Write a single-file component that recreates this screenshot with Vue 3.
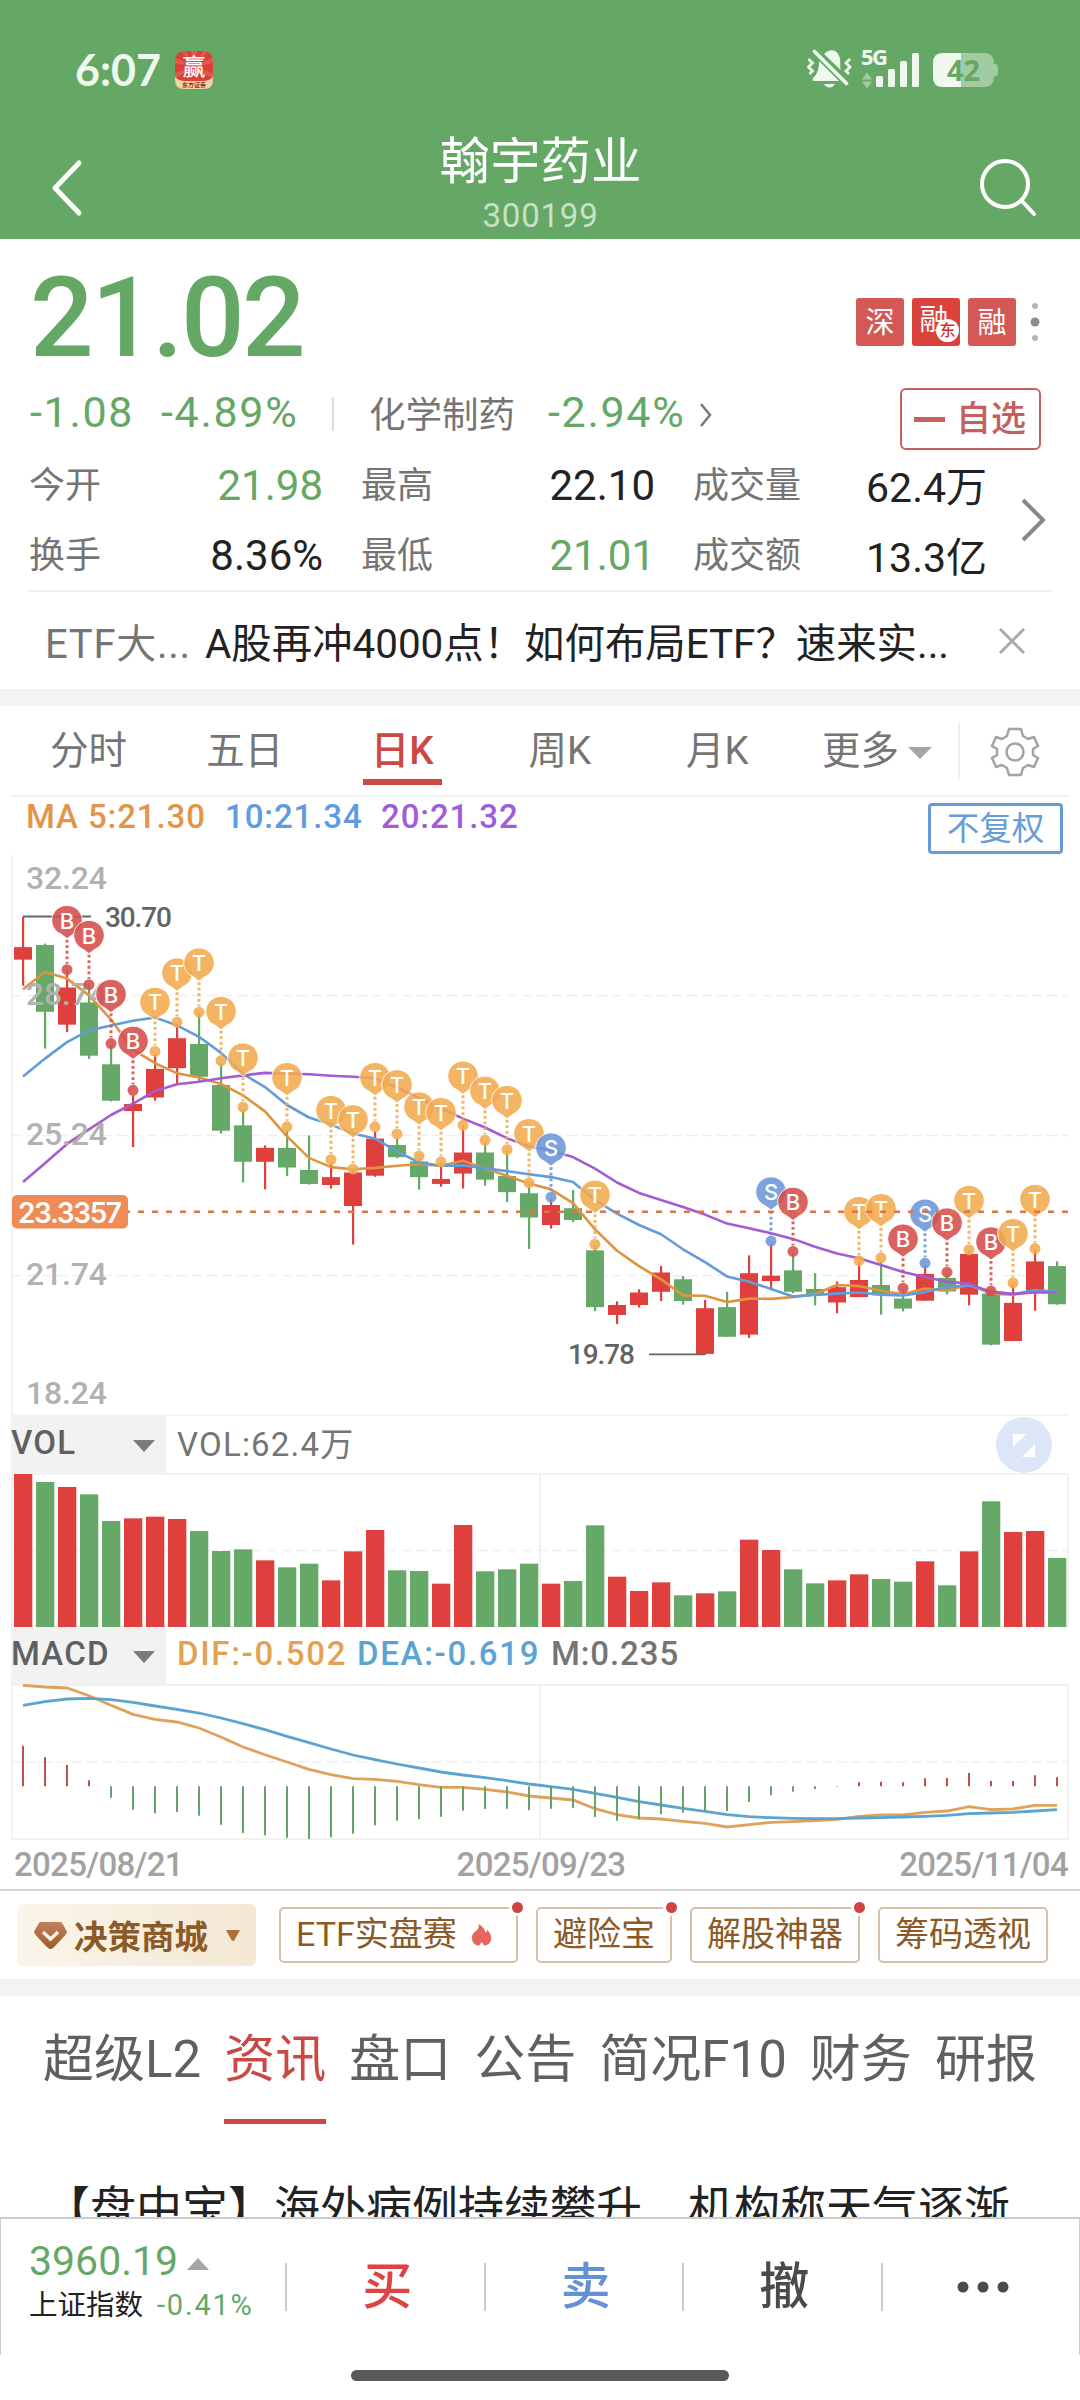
<script setup>
import { ref } from 'vue'

const period = ref('日K')
const periods = ['分时', '五日', '日K', '周K', '月K']
const section = ref('资讯')
const sections = ['超级L2', '资讯', '盘口', '公告', '简况F10', '财务', '研报']

const stats = [
    [
        { label: '今开', value: '21.98', down: true },
        { label: '换手', value: '8.36%' },
    ],
    [
        { label: '最高', value: '22.10' },
        { label: '最低', value: '21.01', down: true },
    ],
    [
        { label: '成交量', value: '62.4万' },
        { label: '成交额', value: '13.3亿' },
    ],
]

const chips = [
    { name: 'ETF实盘赛', dot: true, hot: true },
    { name: '避险宝', dot: true },
    { name: '解股神器', dot: true },
    { name: '筹码透视' },
]

// 共 48 根，涨红跌绿
const trend = 'RGRGGRRRGGGRGGRRRGGRRGGGRGGRRRGRGRRGGRRGGRGRGRRG'
const color = (i) => (trend[i] === 'R' ? '#e0403d' : '#66a867')
const cx = (i) => 23 + i * 22

// K线：最高、实体上沿、实体下沿、最低
const unit = 2.8
const candles = [
    [215, 300, 335, 408], [290, 294, 481, 584], [363, 413, 517, 538], [405, 455, 604, 613],
    [575, 628, 730, 732], [715, 739, 759, 860], [600, 641, 721, 730], [520, 555, 639, 684],
    [485, 571, 663, 675], [625, 686, 814, 822], [755, 799, 901, 959], [855, 862, 901, 978],
    [812, 862, 917, 941], [827, 924, 963, 965], [902, 944, 966, 976], [922, 931, 1025, 1133],
    [815, 836, 940, 943], [835, 854, 888, 891], [890, 900, 944, 979], [905, 949, 963, 971],
    [800, 875, 934, 976], [845, 875, 951, 968], [870, 941, 986, 1014], [965, 989, 1057, 1145],
    [1005, 1022, 1078, 1088], [980, 1031, 1064, 1070], [1135, 1149, 1308, 1319], [1292, 1302, 1330, 1355],
    [1258, 1267, 1302, 1309], [1193, 1211, 1265, 1291], [1221, 1230, 1291, 1301], [1288, 1311, 1439, 1441],
    [1265, 1308, 1391, 1391], [1163, 1213, 1385, 1394], [1130, 1220, 1235, 1257], [1155, 1205, 1265, 1269],
    [1213, 1257, 1272, 1303], [1236, 1252, 1295, 1325], [1180, 1232, 1280, 1280], [1180, 1246, 1275, 1329],
    [1258, 1284, 1312, 1320], [1190, 1215, 1290, 1290], [1215, 1226, 1264, 1272], [1150, 1159, 1273, 1303],
    [1265, 1270, 1413, 1415], [1245, 1296, 1403, 1403], [1145, 1180, 1265, 1318], [1180, 1193, 1300, 1301],
].map((c) => c.map((v) => v / unit))

const ma5 = [418, 370, 388, 435, 503, 587, 625, 653, 665, 683, 715, 760, 830, 890, 916, 922, 918, 912, 908, 912, 898, 920, 940, 962, 978, 1017, 1090, 1150, 1193, 1230, 1275, 1276, 1294, 1284, 1285, 1280, 1272, 1246, 1249, 1262, 1272, 1256, 1262, 1245, 1270, 1273, 1265, 1268]
const ma10 = [662, 612, 566, 533, 519, 506, 497, 519, 551, 596, 655, 692, 742, 777, 797, 822, 836, 872, 903, 912, 911, 919, 927, 936, 944, 958, 1008, 1046, 1078, 1104, 1146, 1182, 1222, 1237, 1257, 1278, 1274, 1270, 1267, 1273, 1275, 1266, 1252, 1247, 1264, 1272, 1260, 1265]
const ma20 = [958, 905, 851, 810, 770, 738, 703, 684, 677, 667, 659, 652, 654, 656, 660, 663, 667, 693, 722, 751, 780, 805, 835, 858, 870, 888, 920, 959, 988, 1008, 1028, 1049, 1074, 1087, 1101, 1117, 1139, 1158, 1171, 1190, 1210, 1224, 1237, 1242, 1266, 1271, 1267, 1267]
const line = (list, scale, base = 0) => list.map((v, i) => `${cx(i)},${((v - base) / scale).toFixed(1)}`).join(' ')

// 买卖点标记：序号、类型、圆点位置
const marks = [
    [2, 'B', 363], [3, 'B', 405], [4, 'B', 570], [5, 'B', 701], [6, 'T', 592], [7, 'T', 510],
    [8, 'T', 482], [9, 'T', 618], [10, 'T', 748], [12, 'T', 803], [14, 'T', 895], [15, 'T', 921],
    [16, 'T', 803], [17, 'T', 823], [18, 'T', 885], [19, 'T', 901], [20, 'T', 799], [21, 'T', 841],
    [22, 'T', 867], [23, 'T', 960], [24, 'S', 1000], [26, 'T', 1132], [34, 'S', 1123], [35, 'B', 1152],
    [38, 'T', 1178], [39, 'T', 1170], [40, 'B', 1255], [41, 'S', 1185], [42, 'B', 1210], [43, 'T', 1147],
    [44, 'B', 1263], [45, 'T', 1240], [46, 'T', 1144],
].map(([i, type, v]) => ({ x: cx(i), y: v / unit, type }))
const markColor = { B: '#d64e4d', T: '#f2ab4f', S: '#6d97d8' }

const priceLabels = [
    { text: '32.24', y: 49 },
    { text: '28.74', y: 164.5 },
    { text: '25.24', y: 304.5 },
    { text: '21.74', y: 444.5 },
    { text: '18.24', y: 563.5 },
]

// 成交量与 MACD
const volumes = [222, 246, 261, 283, 363, 355, 350, 357, 393, 453, 448, 481, 502, 491, 541, 454, 390, 511, 513, 551, 375, 514, 508, 491, 551, 543, 376, 530, 573, 547, 586, 580, 574, 419, 450, 508, 550, 541, 523, 537, 545, 484, 556, 454, 304, 396, 393, 474].map((v) => (681 - v) / 3)
const macd = [1037, 1072, 1095, 1141, 1193, 1229, 1240, 1236, 1247, 1274, 1299, 1306, 1313, 1317, 1312, 1301, 1276, 1262, 1257, 1250, 1232, 1227, 1226, 1231, 1226, 1224, 1251, 1262, 1258, 1243, 1238, 1233, 1233, 1206, 1186, 1175, 1167, 1160, 1147, 1145, 1147, 1135, 1134, 1119, 1143, 1143, 1126, 1132].map((v) => (v - 852) / 3)
const dif = [856, 861, 864, 887, 916, 943, 958, 966, 984, 1011, 1041, 1064, 1086, 1108, 1124, 1136, 1138, 1144, 1154, 1162, 1162, 1168, 1176, 1188, 1194, 1200, 1226, 1244, 1254, 1257, 1264, 1270, 1281, 1274, 1267, 1265, 1262, 1258, 1249, 1245, 1245, 1237, 1233, 1220, 1229, 1227, 1216, 1216]
const dea = [916, 905, 897, 895, 899, 907, 918, 928, 939, 954, 971, 989, 1009, 1028, 1047, 1065, 1079, 1092, 1104, 1116, 1125, 1133, 1142, 1152, 1160, 1168, 1180, 1192, 1205, 1215, 1225, 1234, 1244, 1250, 1253, 1255, 1256, 1256, 1254, 1253, 1251, 1249, 1246, 1241, 1239, 1237, 1233, 1229]
</script>

<template>
    <div class="page">
        <header class="header">
            <div class="status">
                <span class="time">6:07</span>
                <svg class="app-icon" width="38" height="38" viewBox="0 0 38 38">
                    <rect width="38" height="38" rx="9" fill="#d8413a" />
                    <path d="M19 16L6 0h5zM19 16L16 0h6zM19 16L28 0h5zM19 16L38 6v6zM19 16L0 6v6zM19 16L0 22v6zM19 16L38 22v6z" fill="#e05a50" />
                    <path d="M0 26Q4 30 10 30H28Q34 30 38 26V29Q38 38 29 38H9Q0 38 0 29z" fill="#f3d3a6" />
                    <text x="19" y="24" class="app-name">赢</text>
                    <text x="19" y="36" class="app-sub">东方证券</text>
                </svg>
                <svg class="signals" width="200" height="50" viewBox="0 0 200 50">
                    <g fill="#eef8ee">
                        <path d="M12 16L32 36H8c-3 0-3-2-1-4 4-4 5-9 5-16z" />
                        <path d="M17 9c5-5 11-5 14 0 3 4 2 9 2.500 16z" />
                        <path d="M17 39h11c-2 4.500-9 4.500-11 0z" />
                        <path d="M7.500 6.500l32 32" stroke="#eef8ee" stroke-width="3.800" stroke-linecap="round" />
                        <path d="M1.500 14l4 4-4 4 4 4-3 3M43 14l-4 4 4 4-4 4 3 3" fill="none" stroke="#eef8ee" stroke-width="2.800" />
                        <rect x="69" y="31" width="7" height="11" rx="1.5" />
                        <rect x="81" y="24" width="7" height="18" rx="1.5" />
                        <rect x="93" y="16" width="7" height="26" rx="1.5" />
                        <rect x="105" y="8" width="7" height="34" rx="1.5" />
                        <text x="54" y="20" class="net" textLength="27">5G</text>
                    </g>
                    <path d="M55 34.500l5-7 5 7zM55 36.500l5 7 5-7z" fill="#a3cba3" />
                    <path d="M136 8h41q10 0 10 11h2q2 0 2 6t-2 6h-2q0 11-10 11h-41q-10 0-10-10v-14q0-10 10-10z" fill="#a3cba3" />
                    <path d="M154 8v34h-18q-10 0-10-10v-14q0-10 10-10z" fill="#f0f8f0" />
                    <text x="156.500" y="35.500" class="battery">42</text>
                </svg>
            </div>
            <div class="nav">
                <svg width="40" height="60" viewBox="0 0 40 60" fill="none" stroke="#fff" stroke-width="5" stroke-linecap="round" stroke-linejoin="round">
                    <path d="M31 6L7 31l24 25" />
                </svg>
                <div class="title">
                    <h1>翰宇药业</h1>
                    <p>300199</p>
                </div>
                <svg width="60" height="60" viewBox="0 0 60 60" fill="none" stroke="#fff" stroke-width="4" stroke-linecap="round">
                    <circle cx="27" cy="27" r="23" />
                    <path d="M44 44l12 13" />
                </svg>
            </div>
        </header>

        <section class="quote">
            <div class="price-row">
                <span class="price">21.02</span>
                <div class="badges">
                    <span class="badge">深</span>
                    <span class="badge deep">融<i>东</i></span>
                    <span class="badge">融</span>
                    <svg width="12" height="48" viewBox="0 0 12 48">
                        <circle cx="6" cy="8" r="3" fill="#b5b5b5" />
                        <circle cx="6" cy="24" r="4.500" fill="#8c8c8c" />
                        <circle cx="6" cy="40" r="3" fill="#b5b5b5" />
                    </svg>
                </div>
            </div>
            <div class="change-row">
                <span class="num down diff">-1.08</span>
                <span class="num down rate">-4.89%</span>
                <span class="sep"></span>
                <span class="industry">化学制药</span>
                <span class="num down rate2">-2.94%</span>
                <svg width="14" height="26" viewBox="0 0 14 26" fill="none" stroke="#777" stroke-width="2.500"><path d="M2 2l9 11-9 11" /></svg>
                <button class="optional"><i></i>自选</button>
            </div>
            <div class="stats">
                <div v-for="(col, c) in stats" :key="c" class="col">
                    <div v-for="s in col" :key="s.label" class="stat">
                        <span class="label">{{ s.label }}</span>
                        <span class="num" :class="{ down: s.down }">{{ s.value }}</span>
                    </div>
                </div>
                <svg width="30" height="44" viewBox="0 0 30 44" fill="none" stroke="#888" stroke-width="4"><path d="M4 2l20 20L4 42" /></svg>
            </div>
            <div class="ad">
                <span class="ad-from">ETF大...</span>
                <span class="ad-text">A股再冲4000点！如何布局ETF？速来实...</span>
                <svg width="26" height="26" viewBox="0 0 26 26" stroke="#aaa" stroke-width="3"><path d="M1 1l24 24M25 1L1 25" /></svg>
            </div>
        </section>

        <div class="band"></div>

        <nav class="periods">
            <a v-for="p in periods" :key="p" :class="{ active: p === period }" @click="period = p"><span>{{ p }}</span></a>
            <a class="more"><span>更多</span><svg width="24" height="12" viewBox="0 0 24 12"><path d="M0 0h24L12 12z" fill="#a5a5a5" /></svg></a>
            <span class="line"></span>
            <svg class="gear" width="50" height="50" viewBox="-25 -25 50 50" fill="none" stroke="#a3a3a3" stroke-width="2.500" stroke-linejoin="round">
                <path d="M-6-23H6L8-16 13-13 19-15 23-6 18-3V3L23 6 19 15 13 13 8 16 6 23H-6L-8 16-13 13-19 15-23 6-18 3V-3L-23-6-19-15-13-13-8-16z" />
                <circle r="8.500" />
            </svg>
        </nav>

        <div class="ma">
            <span class="ma5">MA 5:21.30</span>
            <span class="ma10">10:21.34</span>
            <span class="ma20">20:21.32</span>
            <button>不复权</button>
        </div>

        <svg class="chart" width="1080" height="562" viewBox="0 14 1080 562">
            <path d="M12 15V575.500H1068" fill="none" stroke="#f2f2f2" stroke-width="2" />
            <path d="M12 155.500H1068M12 295.500H1068M12 435.500H1068" stroke="#efefef" stroke-width="1.500" stroke-dasharray="10 5" />
            <g v-for="(c, i) in candles" :key="i" :fill="color(i)">
                <rect :x="cx(i) - 1" :y="c[0]" width="2.200" :height="c[3] - c[0]" />
                <rect :x="cx(i) - 9" :y="c[1]" width="18" :height="c[2] - c[1]" />
            </g>
            <path d="M23 76.500H91M649 514.300H705" stroke="#666" stroke-width="1.800" />
            <g fill="none" stroke-width="2.600" stroke-linejoin="round">
                <polyline :points="line(ma5, unit)" stroke="#df9441" />
                <polyline :points="line(ma10, unit)" stroke="#629cda" />
                <polyline :points="line(ma20, unit)" stroke="#a45bd3" />
            </g>
            <text v-for="l in priceLabels" :key="l.text" x="26" :y="l.y" class="axis" textLength="81">{{ l.text }}</text>
            <text x="105" y="86.500" class="extreme" textLength="67">30.70</text>
            <text x="568" y="523.500" class="extreme" textLength="67">19.78</text>
            <g v-for="(m, i) in marks" :key="i">
                <path :d="`M${m.x} ${m.y - 30}V${m.y - 6}`" :stroke="markColor[m.type]" stroke-width="3" stroke-dasharray="2.800 2.800" opacity="0.88" />
                <circle :cx="m.x" :cy="m.y" r="5.500" :fill="markColor[m.type]" opacity="0.88" />
                <path :d="`M${m.x} ${m.y - 31}l-6-4.500a15.300 15 0 1 1 12 0z`" :fill="markColor[m.type]" stroke="#fff" stroke-width="1" opacity="0.88" />
                <text :x="m.x" :y="m.y - 41" class="mark">{{ m.type }}</text>
            </g>
            <path d="M12 371.800H1068" stroke="#dc7443" stroke-width="2.600" stroke-dasharray="6 8" />
            <rect x="12" y="355" width="116" height="33.500" rx="5" fill="#ee8b56" />
            <text x="18" y="382.500" class="now" textLength="104">23.3357</text>
        </svg>

        <div class="indicator">
            <div class="picker">VOL<svg width="22" height="12" viewBox="0 0 22 12"><path d="M0 0h22L11 12z" fill="#7a7a7a" /></svg></div>
            <span class="vol">VOL:62.4万</span>
            <svg class="expand" width="56" height="56" viewBox="0 0 56 56">
                <circle cx="28" cy="28" r="28" fill="#dde6f8" />
                <path d="M17 17h13L17 30zM39 27v13H26z" fill="#fff" />
            </svg>
        </div>
        <svg class="chart" width="1080" height="154" viewBox="0 0 1080 154">
            <path d="M12 153V1H1068V153zM540 1V153" fill="none" stroke="#f2f2f2" stroke-width="2" />
            <path d="M12 77.500H1068" stroke="#efefef" stroke-width="1.500" stroke-dasharray="10 5" />
            <rect v-for="(v, i) in volumes" :key="i" :x="cx(i) - 9" :y="154 - v" width="18.300" :height="v" :fill="color(i)" />
        </svg>

        <div class="indicator">
            <div class="picker">MACD<svg width="22" height="12" viewBox="0 0 22 12"><path d="M0 0h22L11 12z" fill="#7a7a7a" /></svg></div>
            <span class="dif">DIF:-0.502</span>
            <span class="dea">DEA:-0.619</span>
            <span class="m">M:0.235</span>
        </div>
        <svg class="chart" width="1080" height="156" viewBox="0 0 1080 156">
            <path d="M12 155V1H1068V155zM540 1V155" fill="none" stroke="#f2f2f2" stroke-width="2" />
            <path d="M12 78H1068" stroke="#efefef" stroke-width="1.500" stroke-dasharray="10 5" />
            <polyline :points="line(dif, 3, 852)" fill="none" stroke="#dfa25a" stroke-width="2.800" />
            <polyline :points="line(dea, 3, 852)" fill="none" stroke="#5ba4cf" stroke-width="2.800" />
            <path v-for="(v, i) in macd" :key="i" :d="`M${cx(i)} 102.300V${v}`" :stroke="v < 102 ? '#c0504d' : '#66a36b'" stroke-width="2" />
        </svg>
        <div class="dates"><span>2025/08/21</span><span>2025/09/23</span><span>2025/11/04</span></div>

        <div class="tools">
            <div class="mall">
                <svg width="33" height="28" viewBox="0 0 33 28">
                    <defs>
                        <linearGradient id="gem" x2="0" y2="1"><stop stop-color="#c0805c" /><stop offset="1" stop-color="#9c5d28" /></linearGradient>
                    </defs>
                    <path d="M6 1h21q1 0 6 10 0 2-14 16-2.500 2-5 0Q0 13 0 11 5 1 6 1z" fill="url(#gem)" />
                    <path d="M9 11l7.500 7 7.500-7" fill="none" stroke="#f9f0e2" stroke-width="3.500" />
                </svg>
                决策商城
                <svg width="14" height="11" viewBox="0 0 14 11"><path d="M0 0h14L8.500 10q-1.500 2-3 0z" fill="#b0703a" /></svg>
            </div>
            <div v-for="c in chips" :key="c.name" class="chip">
                {{ c.name }}
                <svg v-if="c.hot" width="20" height="22" viewBox="0 0 20 22">
                    <path d="M6.500 0C12 3 13 6 13.500 9L15.500 6C18 9 20 12 19 16 18 20 15 21.500 12 21.500L10 18 7 21.500C2 21 0 18 0 14 0 10 2 8.500 5 6 7 4 7 2 6.500 0z" fill="#e4665c" />
                </svg>
                <i v-if="c.dot"></i>
            </div>
        </div>

        <div class="band"></div>

        <nav class="sections">
            <a v-for="s in sections" :key="s" :class="{ active: s === section }" @click="section = s">{{ s }}</a>
        </nav>
        <div class="news">【盘中宝】海外病例持续攀升　机构称天气逐渐</div>

        <footer class="footer">
            <div class="index">
                <div class="index-top"><span>3960.19</span><svg width="22" height="12" viewBox="0 0 22 12"><path d="M11 0l11 12H0z" fill="#a5a5a5" /></svg></div>
                <div class="index-bottom">上证指数<span>-0.41%</span></div>
            </div>
            <div class="action buy">买</div>
            <div class="action sell">卖</div>
            <div class="action">撤</div>
            <div class="action">
                <svg width="52" height="12" viewBox="0 0 52 12" fill="#4a4a4a"><circle cx="6" cy="6" r="5.500" /><circle cx="26" cy="6" r="5.500" /><circle cx="46" cy="6" r="5.500" /></svg>
            </div>
        </footer>
        <div class="home"></div>
    </div>
</template>

<style>
body {
    background: #fff;
}
</style>

<style scoped>
* {
    box-sizing: border-box;
}
.page {
    width: 1080px;
    height: 2400px;
    overflow: hidden;
    background: #fff;
    color: #757575;
    font-family: Roboto, 'Noto Sans CJK SC', sans-serif;
}
svg {
    display: block;
    flex: none;
}
span,
.mall,
.chip,
a {
    white-space: nowrap;
}
i {
    font-style: normal;
}
button {
    background: none;
    font-family: inherit;
    padding: 0;
}
.header {
    height: 239px;
    background: #65a866;
    color: #fff;
}
.status {
    display: flex;
    align-items: center;
    height: 113px;
    padding: 26px 73px 0 75px;
}
.time {
    width: 100px;
    font: 700 43px/50px Lato, sans-serif;
    color: #eef8ee;
}
.signals {
    margin-left: auto;
}
.app-name {
    font: 500 23px 'Noto Sans CJK SC', sans-serif;
    fill: #fff;
    text-anchor: middle;
}
.app-sub {
    font: 700 6px 'Noto Sans CJK SC', sans-serif;
    fill: #8a3a20;
    text-anchor: middle;
}
.net {
    font: 700 22px 'Noto Sans', sans-serif;
}
.battery {
    font: 700 29px 'Noto Sans', sans-serif;
    fill: #65a866;
    text-anchor: middle;
}
.nav {
    display: flex;
    justify-content: space-between;
    align-items: center;
    height: 126px;
    padding: 22px 42px 0 48px;
}
.title {
    align-self: flex-end;
    height: 126px;
    margin-left: 15px;
    text-align: center;
}
.title h1 {
    margin: 18px 0 0;
    font-size: 50.500px;
    font-weight: 400;
    line-height: 62px;
}
.title p {
    margin: 3px 0 0;
    font-size: 33px;
    line-height: 40px;
    letter-spacing: 0.800px;
    color: #c7e1c7;
}
.quote {
    height: 450px;
}
.price-row {
    display: flex;
    justify-content: space-between;
    align-items: center;
    height: 145px;
    padding: 10px 39px 0 30px;
}
.price {
    font-size: 112px;
    line-height: 120px;
    font-weight: 500;
    letter-spacing: -2.500px;
    color: #65a866;
    padding-top: 3px;
}
.badges {
    display: flex;
    gap: 8px;
    margin-top: 11px;
}
.badges svg {
    margin-left: 5px;
}
.badge {
    position: relative;
    width: 48px;
    height: 48px;
    border-radius: 3px;
    background: #d45855;
    color: #fff;
    font-size: 29px;
    line-height: 50px;
    text-align: center;
}
.badge.deep {
    background: #d9433c;
    font-size: 29px;
    line-height: 44px;
    padding-right: 4px;
}
.badge i {
    position: absolute;
    right: 1px;
    bottom: 4px;
    width: 23px;
    height: 23px;
    border-radius: 50%;
    background: #fff;
    color: #c9352f;
    font-size: 16px;
    font-weight: 500;
    line-height: 23px;
}
.num {
    font-size: 42px;
    color: #222;
}
.num.down {
    color: #65a866;
}
.change-row {
    display: flex;
    align-items: center;
    height: 66px;
    padding: 0 39px 0 30px;
    line-height: 60px;
}
.change-row .num {
    font-size: 43px;
    letter-spacing: 1.700px;
    margin-top: -10px;
}
.diff {
    width: 131px;
}
.rate {
    width: 171px;
}
.rate2 {
    width: 151px;
}
.sep {
    width: 2px;
    height: 34px;
    margin-top: -6px;
    margin-right: 35px;
    background: #ddd;
}
.industry {
    width: 179px;
    font-size: 36.500px;
    margin-top: -3px;
}
.change-row svg {
    margin-top: -4px;
}
.optional {
    display: flex;
    align-items: center;
    gap: 11px;
    width: 141px;
    height: 62px;
    margin: 4px 0 0 auto;
    padding-left: 12px;
    border: 2px solid #c5605f;
    border-radius: 6px;
    color: #c5605f;
    font-size: 35px;
    font-weight: 500;
    line-height: 58px;
    padding-top: 1px;
}
.optional i {
    width: 31px;
    height: 5px;
    background: #c5605f;
}
.stats {
    display: flex;
    align-items: center;
    height: 142px;
    margin: 0 28px;
    border-bottom: 2px solid #eee;
}
.col {
    width: 295px;
    margin-right: 37px;
    padding-top: 2px;
}
.col:nth-child(3) {
    margin-right: 32px;
}
.stat {
    display: flex;
    justify-content: space-between;
    align-items: center;
    height: 70px;
    line-height: 70px;
    padding-left: 1px;
}
.label {
    font-size: 36px;
}
.col:nth-child(3) .stat .num {
    font-size: 41px;
    padding-top: 4px;
}
.ad {
    display: flex;
    align-items: center;
    height: 97px;
    padding: 0 55px 0 45px;
    font-size: 40.400px;
}
.ad-from {
    width: 160px;
    font-size: 40px;
    letter-spacing: 0.700px;
}
.ad-text {
    color: #222;
}
.ad svg {
    margin-left: auto;
}
.band {
    height: 17px;
    background: #f3f3f3;
}
.periods {
    display: flex;
    align-items: center;
    height: 91px;
    margin: 0 11px;
    border-bottom: 2px solid #f0f0f0;
    font-size: 38.500px;
}
.periods a {
    display: flex;
    flex-direction: column;
    align-items: center;
    width: 157.500px;
    height: 80px;
    padding-top: 6px;
    line-height: 68px;
}
.periods a:first-child {
    width: 155px;
}
.periods .active {
    color: #cc4844;
    font-weight: 500;
}
.periods .active::after {
    content: '';
    width: 79px;
    height: 6px;
    margin-top: -6px;
    background: #cc4844;
}
.periods .more {
    flex-direction: row;
    align-items: flex-start;
    justify-content: center;
    gap: 9px;
    width: 162px;
}
.more svg {
    margin-top: 30px;
}
.line {
    width: 2px;
    height: 56px;
    background: #eee;
}
.gear {
    margin-left: 30px;
    margin-top: 2px;
}
.ma {
    display: flex;
    height: 57px;
    padding: 0 17px 0 26px;
    font-size: 33px;
    font-weight: 500;
    line-height: 40px;
    letter-spacing: 0.900px;
}
.ma5 {
    width: 199px;
    color: #e29549;
}
.ma10 {
    width: 156px;
    color: #5f9be0;
}
.ma20 {
    color: #a15cd8;
}
.ma button {
    width: 135px;
    height: 51px;
    margin: 6px 0 0 auto;
    border: 3px solid #669cd8;
    border-radius: 4px;
    color: #669cd8;
    font-size: 32.500px;
    line-height: 42px;
}
.axis {
    font: 500 32px Roboto, sans-serif;
    fill: #b1b1b1;
}
.extreme {
    font: 500 28px Roboto, sans-serif;
    fill: #646464;
}
.mark {
    font: 500 22px Inter, sans-serif;
    fill: #fff;
    text-anchor: middle;
}
.now {
    font: 600 28px Inter, sans-serif;
    fill: #fff;
}
.indicator {
    display: flex;
    align-items: center;
    height: 57px;
    padding: 0 28px 0 11px;
    font-size: 33px;
    font-weight: 500;
    letter-spacing: 1.200px;
}
.picker {
    display: flex;
    justify-content: space-between;
    align-items: center;
    width: 155px;
    height: 57px;
    padding: 0 11px 4px 0;
    margin-right: 11px;
    background: #f2f2f2;
    color: #606060;
}
.picker svg {
    margin-top: 6px;
}
.expand {
    margin-left: auto;
}
.indicator > span {
    margin-top: -5px;
}
.vol {
    font-weight: 400;
}
.dif {
    width: 180px;
    letter-spacing: 1.700px;
    color: #e3a252;
}
.dea {
    width: 194px;
    letter-spacing: 1.700px;
    color: #5ba4d2;
}
.m {
    letter-spacing: 0.900px;
}
.dates {
    display: flex;
    justify-content: space-between;
    height: 51px;
    padding: 0 12px 0 14px;
    border-bottom: 2px solid #d6d6d6;
    font-size: 33px;
    font-weight: 500;
    line-height: 49px;
    letter-spacing: -0.700px;
    color: #a2a2a2;
}
.tools {
    display: flex;
    align-items: center;
    height: 88px;
    padding: 0 0 1px 17px;
    color: #8b5a26;
    font-size: 34px;
}
.mall {
    display: flex;
    align-items: center;
    width: 239px;
    height: 62px;
    margin-right: 23px;
    padding-left: 17px;
    gap: 7px;
    border-radius: 6px;
    background: linear-gradient(90deg, #fbf5ea, #f4e7d4);
    font-size: 33.500px;
    font-weight: 700;
}
.mall svg:last-child {
    margin-left: 11px;
    margin-top: 2px;
}
.chip {
    position: relative;
    display: flex;
    align-items: center;
    height: 56px;
    margin-right: 18px;
    padding: 0 15px;
    border: 2px solid #d6c2a8;
    border-radius: 5px;
    line-height: 50px;
    padding-bottom: 2px;
}
.chip:nth-child(2) {
    width: 239px;
}
.chip svg {
    margin-left: 15px;
    margin-top: 2px;
}
.chip i {
    position: absolute;
    top: -10px;
    right: -10px;
    width: 17px;
    height: 17px;
    border: 3px solid #fff;
    border-radius: 50%;
    background: #d1433f;
}
.sections {
    display: flex;
    justify-content: space-between;
    height: 128px;
    padding: 0 43px;
    font-size: 51px;
    line-height: 127px;
    color: #606060;
}
.sections .active {
    color: #cc4844;
    border-bottom: 5px solid #cc4844;
}
.news {
    height: 93px;
    padding: 49px 0 0 44px;
    overflow: hidden;
    white-space: nowrap;
    font-size: 46px;
    line-height: 70px;
    color: #222;
}
.footer {
    display: flex;
    align-items: center;
    height: 138px;
    border: 1px solid #ccc;
    border-top-width: 2px;
    border-bottom: 0;
}
.index {
    width: 284px;
    height: 102px;
    padding-left: 28px;
}
.index-top {
    display: flex;
    align-items: center;
    gap: 9px;
    color: #65a866;
    font-size: 41px;
    line-height: 50px;
}
.index-top svg {
    margin-top: 6px;
}
.index-bottom {
    color: #222;
    font-size: 28.500px;
    line-height: 39px;
}
.index-bottom span {
    margin-left: 14px;
    color: #65a866;
    font-size: 29px;
    letter-spacing: 1.800px;
}
.action {
    display: flex;
    flex: 1;
    justify-content: center;
    padding-left: 4px;
    color: #4a4a4a;
    font-size: 50px;
    font-weight: 500;
    line-height: 50px;
    border-left: 2px solid #ccc;
    height: 48px;
    align-items: center;
}
.buy {
    color: #dc4343;
}
.sell {
    color: #6690d6;
}
.home {
    width: 378px;
    height: 11px;
    margin: 15px auto 0;
    border-radius: 6px;
    background: #5a5a5a;
}
</style>
